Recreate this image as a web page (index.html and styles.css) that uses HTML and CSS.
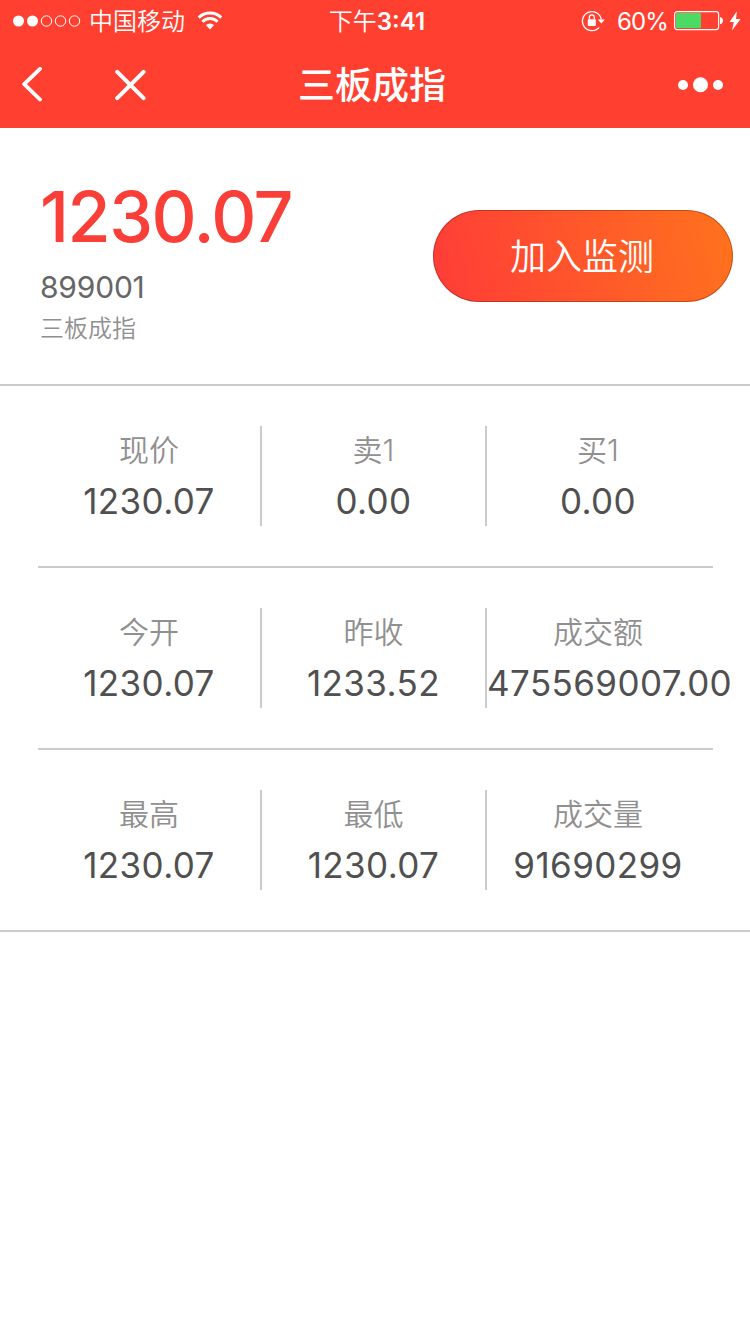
FILE: index.html
```html
<!DOCTYPE html>
<html lang="zh-CN">
<head>
  <meta charset="UTF-8">
  <title>三板成指</title>
  <link rel="stylesheet" href="styles.css">
</head>
<body>

<header class="header">
  <div class="status-bar">
    <div class="status-left">
      <svg class="signal" width="68" height="12" viewBox="0 0 68 12">
        <g fill="#fff">
          <circle cx="5.5" cy="6" r="5.5"/>
          <circle cx="19.5" cy="6" r="5.5"/>
        </g>
        <g fill="none" stroke="#fff">
          <circle cx="33.5" cy="6" r="5.2"/>
          <circle cx="47.5" cy="6" r="5.2"/>
          <circle cx="61.5" cy="6" r="5.2"/>
        </g>
      </svg>
      <span class="carrier">中国移动</span>
      <svg class="wifi" width="26" height="20" viewBox="0 0 26 20">
        <g fill="none" stroke="#fff" stroke-width="2.9">
          <path d="M1.7 6.6a16 16 0 0 1 22.6 0"/>
          <path d="M5.4 10.7a10.8 10.8 0 0 1 15.2 0"/>
        </g>
        <path d="M8.9 14a6 6 0 0 1 8.2 0L13 18.4z" fill="#fff"/>
      </svg>
    </div>
    <div class="status-time"><span class="period">下午</span>3:41</div>
    <div class="status-right">
      <svg class="lock" width="24" height="22" viewBox="0 0 24 22">
        <path d="M18.2 17.3A9.5 9.5 0 1 1 20.3 9.5" fill="none" stroke="#fff" stroke-width="1.3"/>
        <path d="M16.8 9.5h7l-3.5 4z" fill="#fff"/>
        <rect x="6.8" y="9.3" width="8" height="6.6" rx="0.6" fill="#fff"/>
        <path d="M8.3 9.5V7.4a2.5 2.5 0 0 1 5 0v2.1" fill="none" stroke="#fff" stroke-width="1.3"/>
      </svg>
      <span class="percent">60%</span>
      <svg class="battery" width="50" height="20" viewBox="0 0 50 20">
        <rect x="0.6" y="0.6" width="44" height="18" rx="2.5" fill="none" stroke="#fff" stroke-width="1.2"/>
        <rect x="2" y="2" width="25" height="15" rx="1" fill="#4cd964"/>
        <path d="M46 6c4 0.6 4 6.6 0 7.2z" fill="#fff"/>
      </svg>
      <svg class="bolt" width="12" height="20" viewBox="0 0 12 20">
        <path d="M7.9 0.3 0.5 11h4.3L3 19.4 11.6 8H7z" fill="#fff"/>
      </svg>
    </div>
  </div>
  <div class="nav">
    <div class="nav-left">
      <svg class="back" width="22" height="36" viewBox="0 0 22 36">
        <path d="M20 1.9 4.2 17.1 20 32.5" fill="none" stroke="#fff" stroke-width="3.8" stroke-linecap="round" stroke-linejoin="round"/>
      </svg>
      <svg class="close" width="32" height="32" viewBox="0 0 32 32">
        <path d="M3.2 2.8l26.4 26.4M29.6 2.8L3.2 29.2" stroke="#fff" stroke-width="4" stroke-linecap="round"/>
      </svg>
    </div>
    <h1 class="nav-title">三板成指</h1>
    <svg class="more" width="46" height="16" viewBox="0 0 46 16">
      <g fill="#fff">
        <circle cx="5" cy="8" r="5"/>
        <circle cx="22.5" cy="7.7" r="7.5"/>
        <circle cx="40" cy="8" r="5"/>
      </g>
    </svg>
  </div>
</header>

<section class="summary">
  <div class="quote">
    <div class="price">1230.07</div>
    <div class="code">899001</div>
    <div class="name">三板成指</div>
  </div>
  <button class="btn" type="button">加入监测</button>
</section>

<section class="details">
  <div class="row">
    <div class="cell">
      <div class="label">现价</div>
      <div class="value">1230.07</div>
    </div>
    <div class="cell">
      <div class="label">卖1</div>
      <div class="value">0.00</div>
    </div>
    <div class="cell">
      <div class="label">买1</div>
      <div class="value">0.00</div>
    </div>
  </div>
  <div class="row">
    <div class="cell">
      <div class="label">今开</div>
      <div class="value">1230.07</div>
    </div>
    <div class="cell">
      <div class="label">昨收</div>
      <div class="value">1233.52</div>
    </div>
    <div class="cell">
      <div class="label">成交额</div>
      <div class="value">475569007.00</div>
    </div>
  </div>
  <div class="row">
    <div class="cell">
      <div class="label">最高</div>
      <div class="value">1230.07</div>
    </div>
    <div class="cell">
      <div class="label">最低</div>
      <div class="value">1230.07</div>
    </div>
    <div class="cell">
      <div class="label">成交量</div>
      <div class="value">91690299</div>
    </div>
  </div>
</section>

</body>
</html>
```
FILE: styles.css
```css
* {
  box-sizing: border-box;
}

body {
  margin: 0;
  font-family: Inter, "Noto Sans CJK SC", sans-serif;
  background-color: #fff;
}

svg {
  display: block;
  flex-shrink: 0;
}

.header {
  height: 128px;
  background-color: #ff4031;
  color: #fff;
}

.status-bar {
  display: grid;
  grid-template-columns: 1fr auto 1fr;
  align-items: center;
  height: 41px;
  padding: 0 9px 0 13px;
  font-size: 24px;
  line-height: 41px;
}

.status-left,
.status-right {
  display: flex;
  align-items: center;
  height: 41px;
}

.status-right {
  justify-content: flex-end;
}

.carrier {
  margin: 0 12px 0 8px;
  padding-top: 1px;
  font-weight: 350;
}

.status-time {
  padding-top: 1px;
  font-weight: 600;
}

.period {
  font-weight: 350;
}

.percent {
  margin: 0 6px 0 12px;
  font-weight: 370;
  letter-spacing: -0.9px;
}

.bolt {
  margin-left: 5px;
}

.nav {
  display: grid;
  grid-template-columns: 1fr auto 1fr;
  align-items: center;
  height: 87px;
  padding: 0 26px 0 20px;
}

.nav-left {
  display: flex;
  align-items: center;
  gap: 72px;
}

.nav-title {
  margin: 0;
  padding-top: 2px;
  font-size: 37px;
  font-weight: 500;
  line-height: 83px;
}

.more {
  justify-self: end;
}

.summary {
  display: flex;
  justify-content: space-between;
  height: 258px;
  padding: 52px 17px 0 40px;
  border-bottom: 2px solid #ccc;
}

.price {
  font-size: 70px;
  font-weight: 550;
  line-height: 73px;
  letter-spacing: -1.5px;
  color: #fa3e38;
}

.code {
  margin-top: 14px;
  font-size: 30px;
  font-weight: 370;
  line-height: 40px;
  letter-spacing: -0.2px;
  color: #666;
}

.name {
  padding-top: 2px;
  font-size: 24px;
  font-weight: 350;
  line-height: 40px;
  color: #909090;
}

.btn {
  width: 300px;
  height: 92px;
  margin-top: 30px;
  padding: 0 2px 4px 0;
  border: 1px solid rgba(0, 0, 0, 0.25);
  border-radius: 46px;
  background: linear-gradient(75deg, #ff3b38, #ff731d) border-box;
  color: #fff;
  font-family: inherit;
  font-size: 36px;
  font-weight: 350;
}

.details {
  padding: 0 37px 0 38px;
  border-bottom: 2px solid #ccc;
}

.row {
  display: flex;
  height: 182px;
  padding: 40px 0;
  border-bottom: 2px solid #ccc;
}

.row:last-child {
  height: 180px;
  border-bottom: none;
}

.cell {
  flex: 0 0 225px;
  height: 100px;
  border-right: 2px solid #ccc;
  text-align: center;
}

.cell:first-child {
  flex-basis: 224px;
}

/* long amounts run past the column, the label stays centred */
.cell:last-child {
  flex-basis: 222px;
  min-width: 0;
  border-right: none;
}

.label {
  padding-top: 1px;
  font-size: 30px;
  font-weight: 350;
  line-height: 47px;
  color: #909090;
}

.value {
  font-size: 35px;
  font-weight: 380;
  line-height: 54px;
  letter-spacing: 0.4px;
  color: #505050;
}
```
